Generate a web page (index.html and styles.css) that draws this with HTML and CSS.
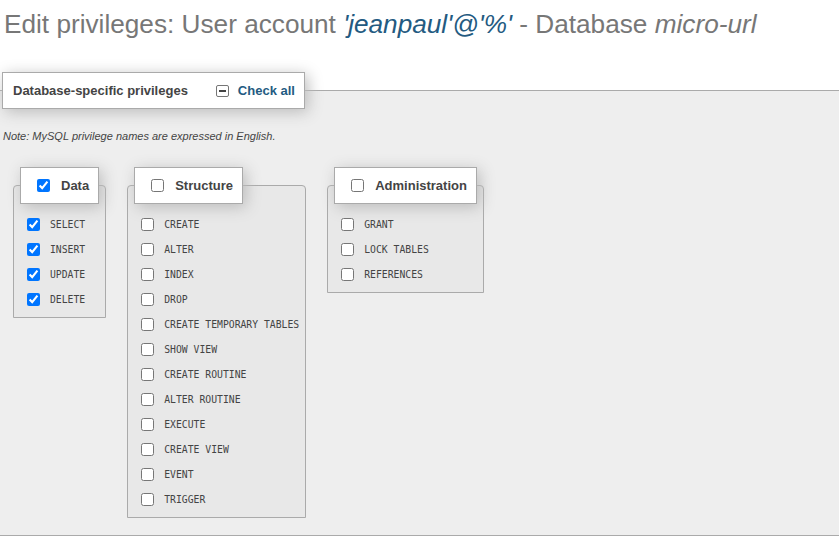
FILE: index.html
```html
<!DOCTYPE html>
<html lang="en">
<head>
<meta charset="utf-8">
<title>Edit privileges</title>
<link rel="stylesheet" href="styles.css">
</head>
<body>
<h2 class="page-title">Edit privileges: User account <i class="acct">'jeanpaul'@'%'</i> - Database <i>micro-url</i></h2>
<fieldset class="priv-set">
  <legend class="priv-legend">
    <span class="legend-title">Database-specific privileges</span>
    <span class="checkall"><span class="indet-box"></span><span class="checkall-text">Check all</span></span>
  </legend>
  <p class="note">Note: MySQL privilege names are expressed in English.</p>
  <div class="groups">
    <fieldset class="group">
      <legend class="group-legend"><label class="group-label"><input type="checkbox" checked><span>Data</span></label></legend>
      <div class="items">
        <label class="item"><input type="checkbox" checked><code>SELECT</code></label>
        <label class="item"><input type="checkbox" checked><code>INSERT</code></label>
        <label class="item"><input type="checkbox" checked><code>UPDATE</code></label>
        <label class="item"><input type="checkbox" checked><code>DELETE</code></label>
      </div>
    </fieldset>
    <fieldset class="group">
      <legend class="group-legend"><label class="group-label"><input type="checkbox"><span>Structure</span></label></legend>
      <div class="items">
        <label class="item"><input type="checkbox"><code>CREATE</code></label>
        <label class="item"><input type="checkbox"><code>ALTER</code></label>
        <label class="item"><input type="checkbox"><code>INDEX</code></label>
        <label class="item"><input type="checkbox"><code>DROP</code></label>
        <label class="item"><input type="checkbox"><code>CREATE TEMPORARY TABLES</code></label>
        <label class="item"><input type="checkbox"><code>SHOW VIEW</code></label>
        <label class="item"><input type="checkbox"><code>CREATE ROUTINE</code></label>
        <label class="item"><input type="checkbox"><code>ALTER ROUTINE</code></label>
        <label class="item"><input type="checkbox"><code>EXECUTE</code></label>
        <label class="item"><input type="checkbox"><code>CREATE VIEW</code></label>
        <label class="item"><input type="checkbox"><code>EVENT</code></label>
        <label class="item"><input type="checkbox"><code>TRIGGER</code></label>
      </div>
    </fieldset>
    <fieldset class="group">
      <legend class="group-legend"><label class="group-label"><input type="checkbox"><span>Administration</span></label></legend>
      <div class="items">
        <label class="item"><input type="checkbox"><code>GRANT</code></label>
        <label class="item"><input type="checkbox"><code>LOCK TABLES</code></label>
        <label class="item"><input type="checkbox"><code>REFERENCES</code></label>
      </div>
    </fieldset>
  </div>
</fieldset>
</body>
</html>
```
FILE: styles.css
```css
html, body {
  margin: 0;
  background: #fff;
  overflow: hidden;
}
body {
  font-family: "Liberation Sans", Arial, sans-serif;
  color: #444;
}
.page-title {
  margin: 0;
  padding: 9px 0 0 4px;
  font-size: 26.2px;
  line-height: 30px;
  font-weight: normal;
  color: #777;
  white-space: nowrap;
}
.acct {
  color: #235a81;
}
.priv-set {
  margin: 33px 0 0;
  padding: 21px 0 17px;
  border: 1px solid #aaa;
  border-left: 0;
  border-right: 0;
  background: #eee;
  min-width: 0;
}
.priv-legend {
  margin-left: 2px;
  padding: 0 9px 0 10px;
  height: 35px;
  background: #fff;
  border: 1px solid #aaa;
  box-shadow: 3px 3px 15px #bbb;
  display: flex;
  align-items: center;
  font-size: 13px;
  font-weight: bold;
}
.legend-title {
  color: #444;
  margin-right: 28px;
}
.checkall {
  display: flex;
  align-items: center;
  gap: 9px;
}
.indet-box {
  box-sizing: border-box;
  width: 13px;
  height: 12px;
  border: 1px solid #767676;
  border-radius: 2px;
  background: #fff;
  display: flex;
  align-items: center;
  justify-content: center;
}
.indet-box::after {
  content: "";
  width: 7px;
  height: 2px;
  background: #444;
}
.checkall-text {
  color: #235a81;
}
.note {
  margin: 0;
  padding-left: 3px;
  font-size: 11px;
  line-height: 13px;
  font-style: italic;
  color: #444;
}
.groups {
  display: flex;
  align-items: flex-start;
  gap: 21px;
  padding-left: 13px;
  margin-top: 24px;
}
.group {
  margin: 0;
  padding: 8px 6px 5px 6px;
  border: 1px solid #aaa;
  border-radius: 4px 4px 0 0;
  background: #e8e8e8;
  min-width: 0;
}
.group-legend {
  margin: 0;
  padding: 0 9px 0 16px;
  height: 35px;
  background: #fff;
  border: 1px solid #aaa;
  box-shadow: 3px 3px 15px #bbb;
  display: flex;
  align-items: center;
}
.group-label {
  display: flex;
  align-items: center;
  gap: 11px;
  font-size: 13px;
  font-weight: bold;
  color: #444;
}
.group-label input,
.item input {
  margin: 0;
  width: 13px;
  height: 13px;
}
.items {
  display: flex;
  flex-direction: column;
}
.item {
  display: flex;
  align-items: center;
  gap: 10px;
  height: 25px;
  padding-left: 7px;
}
.item code {
  font-family: "DejaVu Sans Mono", "Liberation Mono", monospace;
  font-size: 9.75px;
  color: #444;
  white-space: nowrap;
}
```
